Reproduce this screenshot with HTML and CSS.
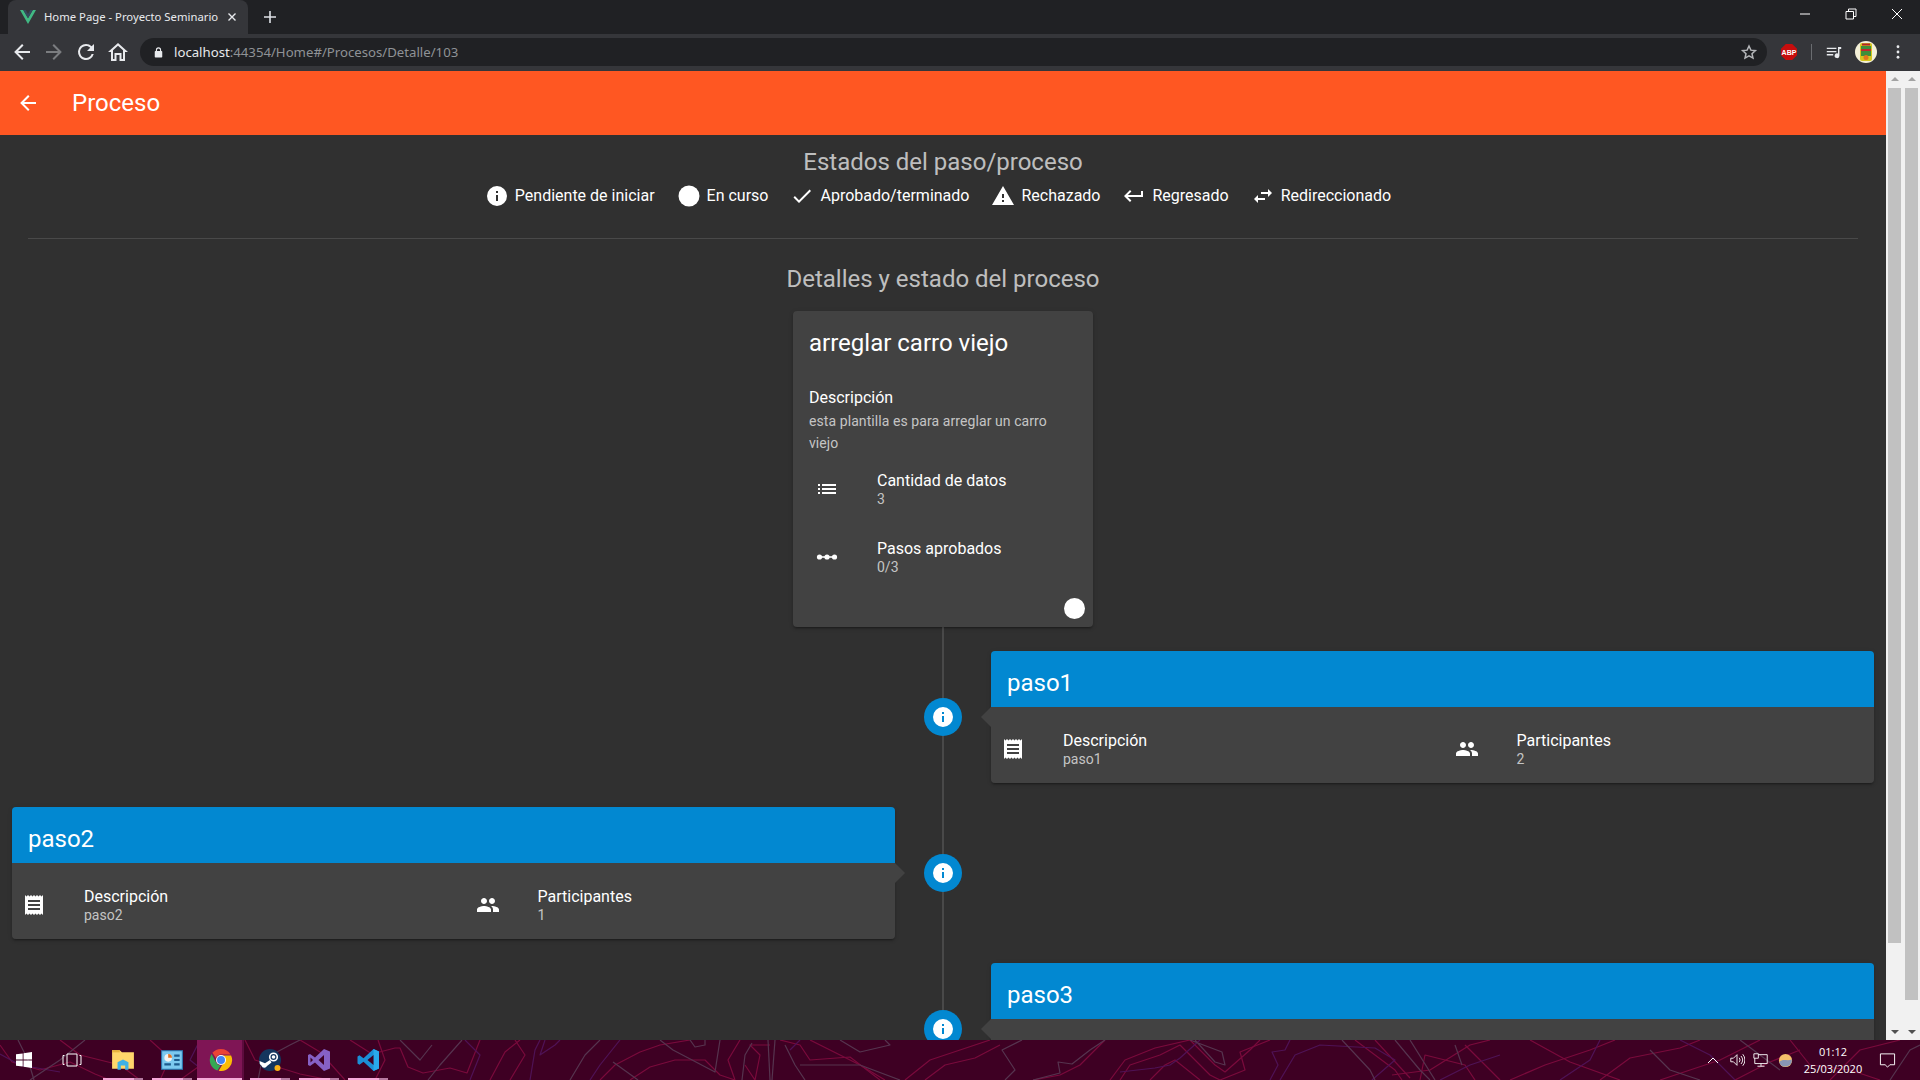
FILE: index.html
```html
<!DOCTYPE html>
<html lang="es">
<head>
<meta charset="utf-8">
<title>Home Page - Proyecto Seminario</title>
<link rel="stylesheet" href="styles.css">
</head>
<body>
<svg class="defs" aria-hidden="true">
  <symbol id="i-info" viewBox="0 0 24 24"><path d="M13,9H11V7H13M13,17H11V11H13M12,2A10,10 0 0,0 2,12A10,10 0 0,0 12,22A10,10 0 0,0 22,12A10,10 0 0,0 12,2Z"/></symbol>
  <symbol id="i-circle" viewBox="0 0 24 24"><circle cx="12" cy="12" r="10.5"/></symbol>
  <symbol id="i-check" viewBox="0 0 24 24"><path d="M21,7L9,19L3.5,13.5L4.91,12.09L9,16.17L19.59,5.59L21,7Z"/></symbol>
  <symbol id="i-alert" viewBox="0 0 24 24"><path d="M13,14H11V10H13M13,18H11V16H13M1,21H23L12,2L1,21Z"/></symbol>
  <symbol id="i-return" viewBox="0 0 24 24"><path d="M19,7V11H5.83L9.41,7.41L8,6L2,12L8,18L9.41,16.58L5.83,13H21V7H19Z"/></symbol>
  <symbol id="i-swap" viewBox="0 0 24 24"><path d="M21,9L17,5V8H10V10H17V13M7,11L3,15L7,19V16H14V14H7V11Z"/></symbol>
  <symbol id="i-back" viewBox="0 0 24 24"><path d="M20,11V13H8L13.5,18.5L12.08,19.92L4.16,12L12.08,4.08L13.5,5.5L8,11H20Z"/></symbol>
  <symbol id="i-list" viewBox="0 0 24 24"><path d="M3 13h2v-2H3v2zm0 4h2v-2H3v2zm0-8h2V7H3v2zm4 4h14v-2H7v2zm0 4h14v-2H7v2zM7 7v2h14V7H7z"/></symbol>
  <symbol id="i-dots" viewBox="0 0 24 24"><path d="M4 11.2h16v1.6H4z"/><circle cx="4.5" cy="12" r="2.6"/><circle cx="12" cy="12" r="2.6"/><circle cx="19.5" cy="12" r="2.6"/></symbol>
  <symbol id="i-receipt" viewBox="0 0 24 24"><path d="M18 17H6v-2h12v2zm0-4H6v-2h12v2zm0-4H6V7h12v2zM3 22l1.5-1.5L6 22l1.5-1.5L9 22l1.5-1.5L12 22l1.5-1.5L15 22l1.5-1.5L18 22l1.5-1.5L21 22V2l-1.5 1.5L18 2l-1.5 1.5L15 2l-1.5 1.5L12 2l-1.5 1.5L9 2 7.5 3.5 6 2 4.5 3.5 3 2v20z"/></symbol>
  <symbol id="i-people" viewBox="0 0 24 24"><path d="M16 11c1.66 0 2.99-1.34 2.99-3S17.66 5 16 5c-1.66 0-3 1.34-3 3s1.34 3 3 3zm-8 0c1.66 0 2.99-1.34 2.99-3S9.66 5 8 5C6.34 5 5 6.34 5 8s1.34 3 3 3zm0 2c-2.33 0-7 1.17-7 3.5V19h14v-2.5c0-2.33-4.67-3.5-7-3.5zm8 0c-.29 0-.62.02-.97.05 1.16.84 1.97 1.97 1.97 3.45V19h6v-2.5c0-2.33-4.67-3.5-7-3.5z"/></symbol>
</svg>

<div class="screen">
  <header class="tabstrip">
    <div class="tab">
      <svg class="favicon" viewBox="0 0 16 14"><path class="vue-outer" d="M0 0h3.2L8 8.2 12.8 0H16L8 14z"/><path class="vue-inner" d="M3.2 0h2.6L8 3.9 10.2 0h2.6L8 8.2z"/></svg>
      <span class="tab-title">Home Page - Proyecto Seminario</span>
      <svg class="tab-close" viewBox="0 0 10 10"><path d="M1.5 1.5l7 7M8.5 1.5l-7 7"/></svg>
    </div>
    <svg class="new-tab" viewBox="0 0 12 12"><path d="M6 0v12M0 6h12"/></svg>
    <div class="window-controls">
      <svg viewBox="0 0 12 12"><path d="M1 6h10"/></svg>
      <svg viewBox="0 0 12 12"><path d="M1 3.5h7.5V11H1zM3.5 3.5V1H11v7.5H8.5"/></svg>
      <svg viewBox="0 0 12 12"><path d="M1 1l10 10M11 1L1 11"/></svg>
    </div>
  </header>

  <nav class="toolbar">
    <svg class="tool" viewBox="0 0 24 24"><use href="#i-back"/></svg>
    <svg class="tool dim" viewBox="0 0 24 24"><path d="M4 11v2h12l-5.500 5.500 1.420 1.420L19.840 12l-7.920-7.920L10.500 5.500 16 11H4z"/></svg>
    <svg class="tool" viewBox="0 0 24 24"><path d="M17.650 6.350A7.960 7.960 0 0 0 12 4a8 8 0 1 0 7.730 10h-2.080A6 6 0 1 1 12 6c1.660 0 3.140.69 4.220 1.780L13 11h7V4l-2.350 2.350z"/></svg>
    <svg class="tool" viewBox="0 0 24 24"><path d="M12 3L2 12h3v9h5.500v-6h3v6H19v-9h3L12 3zm5 16h-1.500v-6h-7v6H7v-8.800l5-4.500 5 4.500V19z"/></svg>
    <div class="omnibox">
      <svg class="lock" viewBox="0 0 12 14"><path d="M10 5H9.500V3.500a3.500 3.500 0 0 0-7 0V5H2a1 1 0 0 0-1 1v6.500a1 1 0 0 0 1 1h8a1 1 0 0 0 1-1V6a1 1 0 0 0-1-1zM4 5V3.500a2 2 0 0 1 4 0V5H4z"/></svg>
      <span class="url"><span class="url-host">localhost</span>:44354/Home#/Procesos/Detalle/103</span>
      <svg class="star" viewBox="0 0 24 24"><path d="M12 4l2.500 5.500 6 .7-4.500 4 1.300 5.900L12 17.100l-5.300 3 1.300-5.900-4.500-4 6-.7z"/></svg>
    </div>
    <div class="abp"><span>ABP</span></div>
    <div class="tool-sep"></div>
    <svg class="media" viewBox="0 0 20 16"><path d="M1 2h12v1.600H1zM1 6h12v1.600H1zM1 10h8v1.600H1z"/><path d="M15 1h4v2.500h-2.200V12a3 3 0 1 1-1.800-2.700z"/></svg>
    <svg class="avatar" viewBox="0 0 22 22"><circle cx="11" cy="11" r="11" fill="#f4f0d8"/><rect x="5" y="2" width="12" height="18" rx="2" fill="#d4c51e"/><rect x="6" y="5" width="10" height="10" fill="#3e8e3a"/><rect x="6" y="8" width="10" height="2" fill="#c2262e"/><circle cx="11" cy="16.500" r="2.500" fill="#e0761d"/><rect x="7" y="2.500" width="8" height="2" fill="#b4232a"/></svg>
    <svg class="kebab" viewBox="0 0 4 16"><circle cx="2" cy="2" r="1.600"/><circle cx="2" cy="8" r="1.600"/><circle cx="2" cy="14" r="1.600"/></svg>
  </nav>

  <div class="window-body">
    <main class="page">
      <div class="appbar">
        <svg class="appbar-back" viewBox="0 0 24 24"><use href="#i-back"/></svg>
        <h1 class="appbar-title">Proceso</h1>
      </div>

      <h2 class="heading heading-top">Estados del paso/proceso</h2>
      <ul class="legend">
        <li class="legend-item"><svg class="icon"><use href="#i-info"/></svg>Pendiente de iniciar</li>
        <li class="legend-item"><svg class="icon"><use href="#i-circle"/></svg>En curso</li>
        <li class="legend-item"><svg class="icon"><use href="#i-check"/></svg>Aprobado/terminado</li>
        <li class="legend-item"><svg class="icon"><use href="#i-alert"/></svg>Rechazado</li>
        <li class="legend-item"><svg class="icon"><use href="#i-return"/></svg>Regresado</li>
        <li class="legend-item"><svg class="icon"><use href="#i-swap"/></svg>Redireccionado</li>
      </ul>
      <hr class="divider">
      <h2 class="heading">Detalles y estado del proceso</h2>

      <section class="process-card">
        <h3 class="process-title">arreglar carro viejo</h3>
        <div class="process-desc">
          <div class="process-desc-label">Descripción</div>
          <p class="process-desc-text">esta plantilla es para arreglar un carro viejo</p>
        </div>
        <div class="process-row">
          <svg class="icon"><use href="#i-list"/></svg>
          <div class="info"><div class="info-label">Cantidad de datos</div><div class="info-value">3</div></div>
        </div>
        <div class="process-row">
          <svg class="icon"><use href="#i-dots"/></svg>
          <div class="info"><div class="info-label">Pasos aprobados</div><div class="info-value">0/3</div></div>
        </div>
        <div class="process-status"></div>
      </section>

      <div class="timeline">
        <article class="step">
          <div class="dot"><svg class="icon"><use href="#i-info"/></svg></div>
          <div class="step-card">
            <h3 class="step-title">paso1</h3>
            <div class="step-body caret-left">
              <div class="step-col"><svg class="icon"><use href="#i-receipt"/></svg><div class="info"><div class="info-label">Descripción</div><div class="info-value">paso1</div></div></div>
              <div class="step-col step-col-2"><svg class="icon"><use href="#i-people"/></svg><div class="info"><div class="info-label">Participantes</div><div class="info-value">2</div></div></div>
            </div>
          </div>
        </article>
        <article class="step">
          <div class="step-card">
            <h3 class="step-title">paso2</h3>
            <div class="step-body caret-right">
              <div class="step-col"><svg class="icon"><use href="#i-receipt"/></svg><div class="info"><div class="info-label">Descripción</div><div class="info-value">paso2</div></div></div>
              <div class="step-col step-col-2"><svg class="icon"><use href="#i-people"/></svg><div class="info"><div class="info-label">Participantes</div><div class="info-value">1</div></div></div>
            </div>
          </div>
          <div class="dot"><svg class="icon"><use href="#i-info"/></svg></div>
        </article>
        <article class="step">
          <div class="dot"><svg class="icon"><use href="#i-info"/></svg></div>
          <div class="step-card">
            <h3 class="step-title">paso3</h3>
            <div class="step-body caret-left"></div>
          </div>
        </article>
      </div>
    </main>

    <div class="scrollbar">
      <span class="arrow-up"></span><span class="thumb thumb-short"></span><span class="arrow-down"></span>
    </div>
    <div class="scrollbar">
      <span class="arrow-up"></span><span class="thumb thumb-long"></span><span class="arrow-down"></span>
    </div>
  </div>

  <footer class="taskbar">
    <svg class="wallpaper" viewBox="0 0 1920 40" preserveAspectRatio="none" aria-hidden="true">
      <g class="c-red">
        <path d="M0 5L12 22L40 30L70 22L95 34L110 40"/><path d="M150 0L170 18L160 40"/><path d="M245 0L255 20L300 34L330 40"/><path d="M350 0L372 14L395 8L400 8L408 27L423 33L450 28L467 33L480 0"/>
        <path d="M60 0L80 15L120 25L140 40"/><path d="M180 40L205 22L230 0"/><path d="M300 0L320 12L345 40"/><path d="M375 40L385 20L378 0"/>
        <path d="M490 40L505 12L520 0"/><path d="M510 40L525 15L515 0"/><path d="M600 40L615 25L640 12L660 5L690 0"/><path d="M630 40L650 27L675 20L705 20L720 35L735 40"/><path d="M740 0L728 20L735 40"/><path d="M745 25L755 40L760 15L750 5L770 5"/><path d="M780 0L800 5L810 20L850 17L880 40"/><path d="M810 0L860 25L885 40"/><path d="M905 40L930 20L960 10L990 0"/><path d="M925 40L945 25L975 18L1000 5"/>
        <path d="M1033 40L1060 35L1080 25L1100 5L1105 0"/><path d="M1110 40L1125 20L1155 8L1190 0L1215 25L1225 32L1250 10L1260 0"/><path d="M1120 40L1130 25L1160 15L1180 5L1210 35L1220 40L1245 30L1240 12L1270 0"/><path d="M1150 40L1165 25L1175 20L1200 40"/><path d="M1355 0L1395 30L1402 40"/><path d="M1375 0L1410 38"/><path d="M1392 35L1430 30L1470 5L1490 0"/><path d="M1420 40L1425 15L1465 25L1475 40"/><path d="M1465 5L1500 40"/>
        <path d="M1530 0L1570 22L1620 40"/><path d="M1600 40L1630 18L1680 8L1700 0"/><path d="M1660 40L1690 30L1720 20L1760 0"/><path d="M1790 0L1810 25L1850 30L1880 40"/><path d="M1830 40L1860 10L1900 0"/><path d="M1510 40L1545 25L1590 10L1615 0"/><path d="M1735 40L1770 22L1800 10"/>
      </g>
      <g class="c-purple">
        <path d="M0 14L20 25L60 32"/><path d="M200 0L190 20L215 40"/><path d="M470 40L480 15L465 0"/><path d="M530 40L535 10L540 0"/><path d="M545 0L540 15L555 5L560 0"/><path d="M590 40L600 25L620 0"/><path d="M790 10L800 0"/><path d="M1120 32L1155 28L1170 25L1180 18L1200 0"/><path d="M1270 40L1278 25L1272 12L1285 10L1290 0"/><path d="M1280 40L1295 15L1320 5L1375 8L1395 20L1372 40"/><path d="M1440 40L1470 25L1500 15"/><path d="M1680 0L1710 15L1735 40"/><path d="M1560 40L1590 20L1600 0"/>
      </g>
      <g class="c-grey">
        <path d="M18 0L28 20L34 40"/><path d="M30 40L60 20L85 0"/><path d="M258 40L262 20L290 5L300 0"/><path d="M400 0L420 20L432 5"/><path d="M428 40L440 25L462 0"/><path d="M570 40L585 15L600 0"/><path d="M613 22L638 40"/><path d="M660 0L673 10L715 32L720 0"/><path d="M690 0L695 7L705 5L705 0"/><path d="M742 40L745 15L752 3"/><path d="M768 0L770 40"/><path d="M775 0L772 40"/><path d="M785 5L795 25L805 40"/><path d="M800 25L860 25L900 40"/><path d="M840 0L860 12L890 5L885 0"/>
        <path d="M1022 0L1002 10L1015 30L1005 40"/><path d="M1033 40L1060 33L1058 22L1072 24L1090 10L1105 0"/><path d="M1195 0L1215 22L1225 25L1222 12L1190 0"/><path d="M1342 0L1370 30L1375 40"/><path d="M1395 0L1420 30L1430 40"/><path d="M1410 0L1435 40"/><path d="M1455 5L1462 25"/><path d="M1650 10L1670 30L1700 40"/><path d="M1740 0L1780 30"/><path d="M1890 40L1910 10L1920 5"/>
      </g>
    </svg>
    <div class="taskbar-start">
      <svg viewBox="0 0 16 16" class="win"><path d="M0 2.300L6.700 1.400V7.500H0zM7.500 1.300L16 0V7.500H7.500zM0 8.400H6.700V14.600L0 13.700zM7.500 8.400H16V16L7.500 14.800z"/></svg>
    </div>
    <div class="taskbar-start">
      <svg viewBox="0 0 20 14" class="taskview"><path d="M5 1h10v12H5zM2.500 2.500H1v9h1.500M17.500 2.500H19v9h-1.500"/></svg>
    </div>
    <div class="app">
      <svg viewBox="0 0 22 22"><path d="M1 2h7l2 2h11v15H1z" fill="#ffd66b"/><path d="M1 2h7v2H1z" fill="#e8b33d"/><path d="M6 20v-7l5-2.500 5 2.500v7h-3v-4H9v4z" fill="#3fb1e6"/></svg>
    </div>
    <div class="app">
      <svg viewBox="0 0 22 22"><rect x="1" y="2" width="20" height="18" fill="#2d7fb8"/><rect x="2" y="3" width="18" height="16" fill="#7cc9ef"/><circle cx="7.500" cy="9" r="3.500" fill="#f2f2f2"/><path d="M7.500 9V5.500A3.500 3.500 0 0 1 11 9z" fill="#e0701e"/><path d="M13 6h5v2h-5zM13 10h5v2h-5zM13 14h5v2h-5zM4 14h6v2H4z" fill="#1d5b8e"/></svg>
    </div>
    <div class="app app-active">
      <svg viewBox="0 0 24 24"><path d="M12 1a11 11 0 0 1 9.530 5.500H12a5.500 5.500 0 0 0-5.170 3.600L3.400 4.800A11 11 0 0 1 12 1z" fill="#ea4335"/><path d="M2.600 6.100l4.700 8.700a5.500 5.500 0 0 0 4.300 2.700L8.400 22.600A11 11 0 0 1 2.600 6.100z" fill="#34a853"/><path d="M22.100 7.600a11 11 0 0 1-12.400 15.200l5-8.300a5.500 5.500 0 0 0-.9-6.900z" fill="#fbbc05"/><circle cx="12" cy="12" r="5" fill="#fff"/><circle cx="12" cy="12" r="4" fill="#4285f4"/></svg>
    </div>
    <div class="app">
      <svg viewBox="0 0 24 24"><circle cx="12" cy="12" r="11" fill="#14365e"/><circle cx="15.500" cy="9" r="3.800" fill="none" stroke="#fff" stroke-width="1.600"/><circle cx="15.500" cy="9" r="1.800" fill="#fff"/><path d="M1.500 13l5.500 2.300 5-3.300 1.500 2.500-4.500 3.500a3 3 0 0 1-5.500-.2L1.800 16z" fill="#fff"/><circle cx="19.500" cy="20" r="3" fill="#fbb216"/></svg>
    </div>
    <div class="app">
      <svg viewBox="0 0 24 24"><path d="M17 1l6 2.500v17L17 23 8 14.500 3 18l-2-1V7l2-1 5 3.500z" fill="#8661c5"/><path d="M17 7l-5.500 5 5.500 5z" fill="#3e0023"/><path d="M3.500 9.500v5L6 12z" fill="#3e0023"/></svg>
    </div>
    <div class="app">
      <svg viewBox="0 0 24 24"><path d="M17.500 1L23 3.500v17L17.500 23 7.500 13.800l-4 3L1.500 15.500v-7l2-1.300 4 3z" fill="#1b8fd6"/><path d="M17.500 1L23 3.500v17L17.500 23z" fill="#29a9ec"/><path d="M17.500 7l-6 5 6 5z" fill="#3e0023"/></svg>
    </div>

    <div class="tray">
      <svg class="tray-icon" viewBox="0 0 16 16"><path d="M3 11l5-5 5 5"/></svg>
      <svg class="tray-icon" viewBox="0 0 18 18"><path d="M2 7v4h3l4 4V3L5 7zM11.500 6.500a4 4 0 0 1 0 5M13.500 4.500a7 7 0 0 1 0 9M15.500 2.500a10 10 0 0 1 0 13"/></svg>
      <svg class="tray-icon" viewBox="0 0 18 18"><path d="M2 3h14v10H2zM9 13v3M5 16h8"/><path class="tray-fill" d="M1 2h5v5H1z"/></svg>
      <svg class="flux" viewBox="0 0 16 16"><circle cx="8" cy="8" r="7" fill="#f4c06a"/><path d="M1.300 10C5 5.500 9 9 14.800 7A7 7 0 0 1 1.300 10z" fill="#8896b4"/></svg>
      <div class="clock"><div>01:12</div><div>25/03/2020</div></div>
      <svg class="notify" viewBox="0 0 18 18"><path d="M1.500 2h15v11.500h-5L9 16l-2.500-2.500h-5z"/></svg>
    </div>
  </footer>
</div>
</body>
</html>
```

FILE: styles.css
```css
* { box-sizing: border-box; }
html, body { margin: 0; padding: 0; width: 1920px; height: 1080px; overflow: hidden; }
body { font-family: Roboto, "Noto Sans", sans-serif; color: #fff; background: #303030; }
.defs { width: 0; height: 0; display: block; overflow: hidden; }
h1, h2, h3, p, ul { margin: 0; padding: 0; font-weight: 400; }
.screen { width: 1920px; height: 1080px; display: flex; flex-direction: column; }

/* browser: tab strip */
.tabstrip { height: 34px; flex: none; display: flex; align-items: flex-start; background: #202124; padding-left: 8px; }
.tab { width: 240px; height: 34px; background: #35363a; border-top-left-radius: 8px; border-top-right-radius: 8px; display: flex; align-items: center; padding: 0 0 1px 12px; }
.favicon { width: 16px; height: 14px; flex: none; }
.vue-outer { fill: #41b883; }
.vue-inner { fill: #35495e; }
.tab-title { font-family: "Noto Sans", sans-serif; font-size: 11.3px; margin-left: 8px; color: #e8eaed; white-space: nowrap; }
.tab-close { width: 10px; height: 10px; margin-left: 9px; stroke: #e8eaed; stroke-width: 1.4; fill: none; flex: none; }
.new-tab { width: 12px; height: 12px; margin: 11px 0 0 16px; stroke: #dee1e6; stroke-width: 1.6; fill: none; flex: none; }
.window-controls { margin-left: auto; display: flex; padding-top: 8px; gap: 34px; padding-right: 17px; }
.window-controls svg { width: 12px; height: 12px; stroke: #fff; stroke-width: 1; fill: none; }

/* browser: toolbar */
.toolbar { height: 37px; flex: none; display: flex; align-items: center; background: #35363a; padding: 0 0 1px 10px; }
.tool { width: 24px; height: 24px; fill: #e8eaed; margin-right: 8px; flex: none; }
.tool:nth-child(4) { margin-right: 10px; }
.dim { fill: #7b7d80; }
.omnibox { width: 1627px; height: 28px; flex: none; background: #202124; border-radius: 14px; display: flex; align-items: center; padding-left: 14px; }
.lock { width: 9px; height: 11px; fill: #e8eaed; flex: none; }
.url { font-family: "Noto Sans", sans-serif; font-size: 13.2px; color: #8f9296; margin-left: 11px; white-space: nowrap; }
.url-host { color: #e8eaed; }
.star { width: 18px; height: 18px; margin-left: auto; margin-right: 9px; fill: none; stroke: #b4b6b9; stroke-width: 2; flex: none; }
.abp { width: 16px; height: 16px; margin-left: 14px; background: #c70d0d; clip-path: polygon(30% 0, 70% 0, 100% 30%, 100% 70%, 70% 100%, 30% 100%, 0 70%, 0 30%); display: flex; align-items: center; justify-content: center; flex: none; }
.abp span { font-family: "Liberation Sans", sans-serif; font-size: 7px; font-weight: 700; color: #fff; }
.tool-sep { width: 1px; height: 16px; background: #6a6c70; margin-left: 14px; flex: none; }
.media { width: 16px; height: 13px; fill: #e8eaed; margin-left: 14px; flex: none; }
.avatar { width: 22px; height: 22px; margin-left: 13px; flex: none; }
.kebab { width: 4px; height: 14px; margin-left: 19px; fill: #e8eaed; flex: none; }

/* window body */
.window-body { flex: 1; min-height: 0; display: flex; overflow: hidden; }
.page { width: 1886px; flex: none; background: #303030; overflow: hidden; }
.scrollbar { width: 17px; flex: none; background: #f1f1f1; display: flex; flex-direction: column; align-items: center; }
.arrow-up { margin-top: 6px; width: 0; height: 0; border-left: 4px solid transparent; border-right: 4px solid transparent; border-bottom: 4px solid #a3a3a3; }
.arrow-down { margin-top: auto; margin-bottom: 6px; width: 0; height: 0; border-left: 4px solid transparent; border-right: 4px solid transparent; border-top: 4px solid #505050; }
.thumb { width: 13px; background: #c1c1c1; margin-top: 7px; flex: none; }
.thumb-short { height: 855px; }
.thumb-long { height: 912px; }

/* app bar */
.appbar { height: 64px; background: #ff5722; display: flex; align-items: center; padding-left: 16px; }
.appbar-back { width: 24px; height: 24px; fill: #fff; flex: none; }
.appbar-title { font-size: 24px; line-height: 32px; margin-left: 32px; }

/* headings and legend */
.heading { font-size: 24px; line-height: 32px; text-align: center; color: rgba(255, 255, 255, .7); }
.heading-top { padding-top: 11px; }
.legend { list-style: none; display: flex; justify-content: center; gap: 22px; margin-top: 6px; padding-right: 10px; height: 24px; }
.legend-item { display: flex; align-items: center; font-size: 16px; line-height: 24px; gap: 6px; white-space: nowrap; }
.icon { width: 24px; height: 24px; fill: #fff; flex: none; display: block; }
.divider { margin: 30px 28px 24px; border: 0; height: 1px; background: rgba(255, 255, 255, .12); }

/* process card */
.process-card { width: 300px; height: 316px; margin: 16px auto 0; background: #424242; border-radius: 4px; box-shadow: 0 3px 1px -2px rgba(0,0,0,.2), 0 2px 2px 0 rgba(0,0,0,.14), 0 1px 5px 0 rgba(0,0,0,.12); padding-top: 16px; position: relative; }
.process-title { font-size: 24px; line-height: 32px; padding: 0 16px; }
.process-desc { padding: 26px 16px 1px; }
.process-desc-label { font-size: 16px; line-height: 25px; }
.process-desc-text { font-size: 14px; line-height: 22px; letter-spacing: .08px; color: rgba(255, 255, 255, .7); }
.process-row { height: 68px; display: flex; align-items: center; padding-left: 22px; gap: 38px; }
.process-status { position: absolute; right: 8px; bottom: 8px; width: 21px; height: 21px; border-radius: 50%; background: #fff; }
.info { padding-top: 2px; }
.info-label { font-size: 16px; line-height: 18px; }
.info-value { font-size: 14px; line-height: 18px; color: rgba(255, 255, 255, .7); }

/* timeline */
.timeline { position: relative; padding-top: 24px; }
.timeline::before { content: ""; position: absolute; left: 942px; top: 0; bottom: -400px; width: 2px; background: rgba(255, 255, 255, .12); }
.step { display: grid; grid-template-columns: 883px 96px 883px; padding: 0 12px; margin-bottom: 24px; position: relative; }
.dot { grid-column: 2; width: 38px; height: 38px; margin: 47px auto 0; border-radius: 50%; background: #0288d1; display: flex; align-items: center; justify-content: center; }
.step-card { border-radius: 4px; box-shadow: 0 3px 1px -2px rgba(0,0,0,.2), 0 2px 2px 0 rgba(0,0,0,.14), 0 1px 5px 0 rgba(0,0,0,.12); }
.step-title { height: 56px; background: #0288d1; font-size: 24px; line-height: 32px; padding: 16px 16px 8px; border-radius: 4px 4px 0 0; }
.step-body { position: relative; height: 76px; background: #424242; display: grid; grid-template-columns: 1fr 1fr; padding-top: 8px; border-radius: 0 0 4px 4px; }
.caret-left::before, .caret-right::before { content: ""; position: absolute; top: 0; width: 0; height: 0; border-top: 10px solid transparent; border-bottom: 10px solid transparent; }
.caret-left::before { left: -10px; border-right: 10px solid #424242; }
.caret-right::before { right: -10px; border-left: 10px solid #424242; }
.step-col { display: flex; align-items: center; padding-left: 10px; gap: 38px; }
.step-col-2 { padding-left: 22px; }

/* taskbar */
.taskbar { height: 40px; flex: none; position: relative; display: flex; background: #3e0023; overflow: hidden; }
.wallpaper { position: absolute; inset: 0; width: 100%; height: 100%; fill: none; stroke-width: 1.2; stroke-linejoin: round; }
.c-red { stroke: #7a0a3c; }
.c-purple { stroke: #4f1256; }
.c-grey { stroke: #56344f; }
.taskbar-start { position: relative; width: 48px; height: 40px; display: flex; align-items: center; justify-content: center; flex: none; }
.taskbar-start + .app { margin-left: 2px; }
.win { width: 16px; height: 16px; fill: #fff; }
.taskview { width: 20px; height: 14px; fill: none; stroke: #fff; stroke-width: 1; }
.app { position: relative; width: 49px; height: 40px; display: flex; align-items: center; justify-content: center; flex: none; }
.app svg { width: 24px; height: 24px; }
.app::after { content: ""; position: absolute; left: 5px; right: 4px; bottom: 0; height: 2px; background: linear-gradient(to right, #f6a9d9 78%, #b57aa0 78%); }
.app-active { background: linear-gradient(to right, transparent 1px, #7f1555 1px, #7f1555 46px, #5e0b3e 46px, #5e0b3e 48px, transparent 48px); }
.app-active::after { left: 1px; right: 3px; background: #f6a9d9; }
.tray { position: relative; margin-left: auto; display: flex; align-items: center; height: 40px; padding-right: 24px; }
.tray-icon { width: 16px; height: 16px; fill: none; stroke: #fff; stroke-width: 1; margin-right: 8px; flex: none; }
.tray-fill { fill: #3e0023; }
.flux { width: 15px; height: 15px; margin-left: 1px; flex: none; }
.clock { width: 70px; margin-left: 5px; font-family: "Open Sans", sans-serif; font-size: 11px; line-height: 17px; text-align: center; color: #fff; }
.notify { width: 17px; height: 17px; margin-left: 11px; fill: none; stroke: #fff; stroke-width: 1; flex: none; }
```
